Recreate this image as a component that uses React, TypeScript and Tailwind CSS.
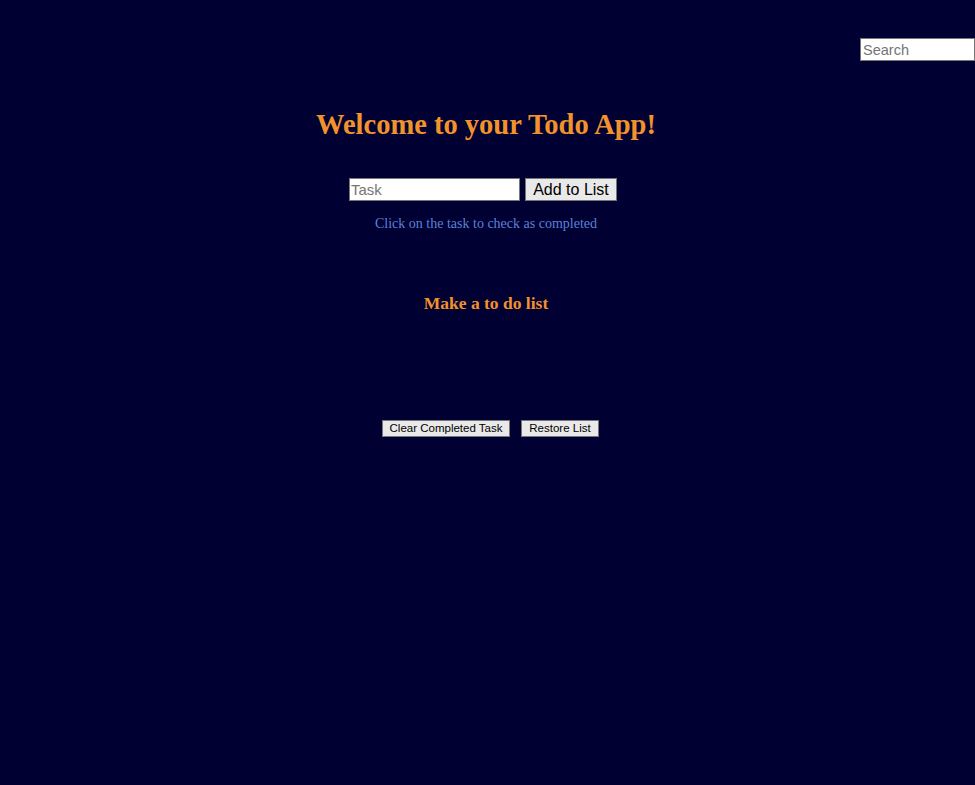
import React from "react";

export default function App(): React.ReactElement {
  return (
    <div className="min-h-[785px] w-full bg-[#000033] font-['Liberation_Serif',serif]">
      {/* Search */}
      <div className="flex justify-end pt-[38px]">
        <input
          placeholder="Search"
          className="h-[23px] w-[115px] bg-white border border-[#767676] px-[2px] text-[14.5px] text-black placeholder:text-[#757575] font-['Liberation_Sans',sans-serif] outline-none"
        />
      </div>

      {/* Heading */}
      <h1 className="mt-[48px] pr-[3px] text-center text-[28.5px] font-bold leading-[32px] text-[#f2922b]">
        Welcome to your Todo App!
      </h1>

      {/* Task form */}
      <div className="mt-[37px] pr-[9px] flex items-center justify-center gap-[5px]">
        <input
          placeholder="Task"
          className="h-[23px] w-[171px] bg-white border border-[#767676] px-[1px] text-[15px] text-black placeholder:text-[#757575] font-['Liberation_Sans',sans-serif] outline-none"
        />
        <button className="h-[23px] w-[92px] bg-[#e9e9e9] border border-[#767676] text-[16px] leading-none text-black font-['Liberation_Sans',sans-serif]">
          Add to List
        </button>
      </div>

      <p className="mt-[14px] pr-[3px] text-center text-[14px] leading-[17px] text-[#5c82d9]">
        Click on the task to check as completed
      </p>

      <h2 className="mt-[61px] pr-[3px] text-center text-[17.5px] font-bold leading-[20px] text-[#f2922b]">
        Make a to do list
      </h2>

      {/* Actions */}
      <div className="mt-[107px] pl-[6px] flex items-center justify-center gap-[11px]">
        <button className="h-[17px] w-[128px] bg-[#e9e9e9] border border-[#767676] text-[11.5px] leading-none text-black font-['Liberation_Sans',sans-serif]">
          Clear Completed Task
        </button>
        <button className="h-[17px] w-[78px] bg-[#e9e9e9] border border-[#767676] text-[11.5px] leading-none text-black font-['Liberation_Sans',sans-serif]">
          Restore List
        </button>
      </div>
    </div>
  );
}
